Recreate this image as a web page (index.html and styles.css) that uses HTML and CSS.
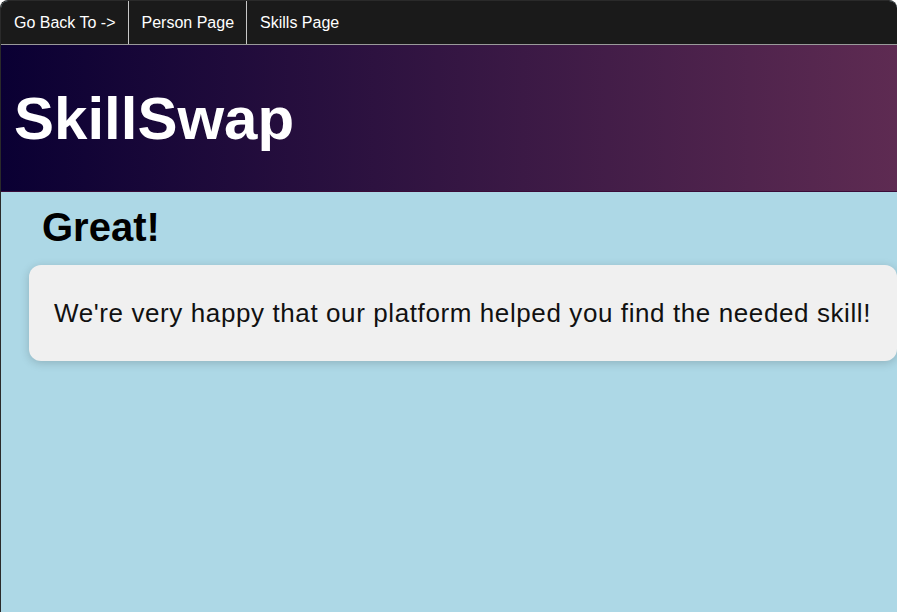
FILE: index.html
```html
<!DOCTYPE html>
<html lang="en">
<head>
<meta charset="utf-8">
<title>SkillSwap</title>
<link rel="stylesheet" href="styles.css">
</head>
<body>
<div class="window">
  <nav class="topnav">
    <a class="nav-item" href="#">Go Back To -&gt;</a>
    <a class="nav-item" href="#">Person Page</a>
    <a class="nav-item" href="#">Skills Page</a>
  </nav>
  <header class="banner">
    <h1 class="brand">SkillSwap</h1>
  </header>
  <main class="content">
    <h2 class="title">Great!</h2>
    <div class="card">
      <p class="message">We're very happy that our platform helped you find the needed skill!</p>
    </div>
  </main>
</div>
</body>
</html>
```

FILE: styles.css
```css
html, body {
  margin: 0;
  padding: 0;
  height: 100%;
  background: #ffffff;
  overflow: hidden;
}

.window {
  height: 100%;
  box-sizing: border-box;
  border-left: 1px solid #2a2a2a;
  border-top: 1px solid #2a2a2a;
  border-radius: 8px 8px 0 0;
  overflow: hidden;
  background: #add8e6;
  font-family: "Liberation Sans", Arial, sans-serif;
}

.topnav {
  display: flex;
  height: 43px;
  background: #1a1a1a;
  border-bottom: 1px solid #9a9a9a;
}

.nav-item {
  display: flex;
  align-items: center;
  padding: 0 12px 0 13px;
  color: #ffffff;
  text-decoration: none;
  font-size: 16px;
}

.nav-item + .nav-item {
  border-left: 1px solid #c8c8c8;
}

.banner {
  height: 146px;
  display: flex;
  align-items: center;
  padding-left: 13px;
  background: linear-gradient(to right, #0a0033, #5e2b52);
  border-bottom: 1px solid #3a0c38;
}

.brand {
  margin: 0;
  color: #ffffff;
  font-size: 60px;
  font-weight: bold;
}

.content {
  padding: 13px 0 0 28px;
}

.title {
  margin: 0 0 15px 13px;
  font-size: 40px;
  font-weight: bold;
  color: #000000;
}

.card {
  box-sizing: border-box;
  width: 868px;
  height: 96px;
  display: flex;
  align-items: center;
  padding: 0 25px;
  background: #f0f0f0;
  border-radius: 12px;
  box-shadow: 0 2px 10px rgba(0, 0, 0, 0.18);
}

.message {
  margin: 0;
  font-size: 26px;
  letter-spacing: 0.6px;
  color: #111111;
  white-space: nowrap;
}
```
